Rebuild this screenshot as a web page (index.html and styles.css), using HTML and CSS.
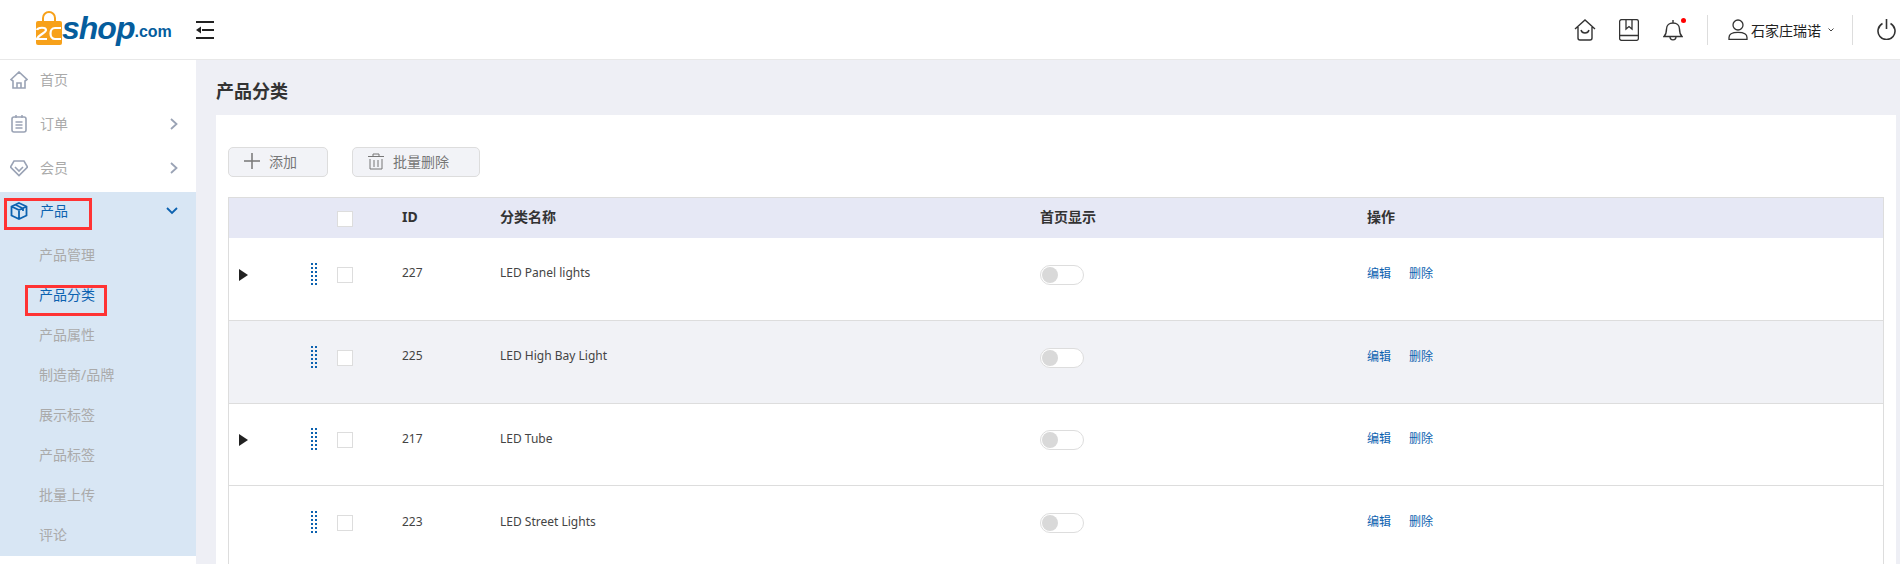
FILE: index.html
```html
<!DOCTYPE html>
<html lang="en">
<head>
  <meta charset="UTF-8">
  <meta name="viewport" content="width=device-width, initial-scale=1.0">
  <title>产品分类</title>
  <link rel="stylesheet" href="styles.css">
</head>
<body>
  <header class="topbar">
    <div class="logo">
      <svg class="logo-bag" width="26" height="34" viewBox="0 0 26 34">
        <path d="M7 11V7a6 6 0 0 1 12 0v4" fill="none" stroke="#f7a11a" stroke-width="2"/>
        <path d="M2 10h22a2 2 0 0 1 2 2v20a2 2 0 0 1-2 2H2a2 2 0 0 1-2-2V12a2 2 0 0 1 2-2z" fill="#f7a11a"/>
        <path d="M1 19c1-3 9-3 9 0 0 3-8 5-9 9h10M25 17h-6c-6 0-6 11 0 11h6" fill="none" stroke="#fff" stroke-width="2.200"/>
      </svg>
      <span class="logo-shop">shop</span><span class="logo-com">.com</span>
    </div>
    <svg class="menu-toggle" width="18" height="18" viewBox="0 0 18 18">
      <path d="M0 1h18M6 9h12M0 17h18" stroke="#222" stroke-width="2"/>
      <path d="M0 9l5-3.500v7z" fill="#222"/>
    </svg>
    <div class="topbar-right">
      <svg class="top-icon" width="22" height="22" viewBox="0 0 22 22">
        <path d="M1 10L11 1l10 9M4 8v11a2 2 0 0 0 2 2h10a2 2 0 0 0 2-2V8M7 11c1 4 7 4 8 0" fill="none" stroke="#333" stroke-width="1.400"/>
      </svg>
      <svg class="top-icon" width="20" height="22" viewBox="0 0 20 22">
        <rect x="0.600" y="0.600" width="18.800" height="20.800" rx="2" fill="none" stroke="#333" stroke-width="1.300"/>
        <path d="M0.600 16.500h18.800M7 1v9l3-2.500 3 2.500V1" fill="none" stroke="#333" stroke-width="1.300"/>
      </svg>
      <span class="bell">
        <svg width="20" height="22" viewBox="0 0 20 22">
          <path d="M1 17.500c2-2 2.500-4 2.500-7.500 0-4 3-6 6.500-6s6.500 2 6.500 6c0 3.500.5 5.500 2.500 7.500zM10 1v3M7 17.500c0 4.500 6 4.500 6 0" fill="none" stroke="#333" stroke-width="1.400"/>
        </svg>
        <i class="bell-dot"></i>
      </span>
      <span class="divider"></span>
      <div class="user">
        <svg width="20" height="21" viewBox="0 0 20 21">
          <circle cx="10" cy="6" r="5" fill="none" stroke="#333" stroke-width="1.300"/>
          <path d="M1 20.400v-2c0-3 3-5 9-5s9 2 9 5v2z" fill="none" stroke="#333" stroke-width="1.300"/>
        </svg>
        <span class="user-name">石家庄瑞诺</span>
        <svg width="6" height="4" viewBox="0 0 6 4"><path d="M.5.500L3 3 5.500.500" fill="none" stroke="#444" stroke-width="1"/></svg>
      </div>
      <span class="divider divider-last"></span>
      <svg width="19" height="21" viewBox="0 0 19 21">
        <path d="M5.500 4.500a8.500 8.500 0 1 0 8 0M9.500 0v10" fill="none" stroke="#333" stroke-width="1.600"/>
      </svg>
    </div>
  </header>

  <div class="layout">
    <aside class="sidebar">
      <a class="nav-item">
        <svg width="18" height="18" viewBox="0 0 18 18"><path d="M1 8.500L9 1l8 7.500-2 1.500v7H3v-7zM7 17v-5h4v5" fill="none" stroke="#9aa3b5" stroke-width="1.600"/></svg>
        <span>首页</span>
      </a>
      <a class="nav-item">
        <svg width="18" height="18" viewBox="0 0 18 18"><rect x="2" y="2" width="14" height="15" rx="2" fill="none" stroke="#9aa3b5" stroke-width="1.600"/><path d="M6 0v3M12 0v3M5.500 7h7M5.500 10h7M5.500 13h7" stroke="#9aa3b5" stroke-width="1.500"/></svg>
        <span>订单</span>
        <svg class="chev" width="8" height="12" viewBox="0 0 8 12"><path d="M1 1l5.500 5L1 11" fill="none" stroke="#9aa3b5" stroke-width="1.800"/></svg>
      </a>
      <a class="nav-item">
        <svg width="18" height="18" viewBox="0 0 18 18"><path d="M4 2h10l3.500 6L9 16.500.5 8zM5 8l4 4 4-4" fill="none" stroke="#9aa3b5" stroke-width="1.600"/></svg>
        <span>会员</span>
        <svg class="chev" width="8" height="12" viewBox="0 0 8 12"><path d="M1 1l5.500 5L1 11" fill="none" stroke="#9aa3b5" stroke-width="1.800"/></svg>
      </a>
      <div class="nav-group">
        <a class="nav-item nav-item-active">
          <svg width="18" height="18" viewBox="0 0 18 18"><path d="M9 1l7.500 3.500v9L9 17l-7.500-3.500v-9zM1.500 4.500L9 8l7.500-3.500M9 8v9M5.500 2.800L13 6.500V9" fill="none" stroke="#0c62b0" stroke-width="1.800"/></svg>
          <span>产品</span>
          <svg class="chev-down" width="12" height="8" viewBox="0 0 12 8"><path d="M1 1l5 5 5-5" fill="none" stroke="#0c62b0" stroke-width="1.800"/></svg>
        </a>
        <a class="sub-item">产品管理</a>
        <a class="sub-item sub-item-active">产品分类</a>
        <a class="sub-item">产品属性</a>
        <a class="sub-item">制造商/品牌</a>
        <a class="sub-item">展示标签</a>
        <a class="sub-item">产品标签</a>
        <a class="sub-item">批量上传</a>
        <a class="sub-item">评论</a>
      </div>
      <div class="mark mark-product"></div>
      <div class="mark mark-category"></div>
    </aside>

    <main class="main">
      <h1 class="page-title">产品分类</h1>
      <section class="card">
        <div class="toolbar">
          <button class="btn btn-add">
            <svg width="16" height="16" viewBox="0 0 16 16"><path d="M8 0v16M0 8h16" stroke="#777" stroke-width="1.500"/></svg>
            添加
          </button>
          <button class="btn btn-del">
            <svg width="16" height="17" viewBox="0 0 16 17"><path d="M0 3.500h16M5 3.500V1h6v2.500M2 6v10h12V6M6 7v7M10 7v7" fill="none" stroke="#777" stroke-width="1"/></svg>
            批量删除
          </button>
        </div>

        <div class="grid">
          <div class="row row-head">
            <span></span>
            <span></span>
            <span class="check"></span>
            <span>ID</span>
            <span>分类名称</span>
            <span>首页显示</span>
            <span>操作</span>
          </div>

          <div class="row">
            <span class="arrow"></span>
            <span class="drag"></span>
            <span class="check"></span>
            <span>227</span>
            <span>LED Panel lights</span>
            <span class="switch"></span>
            <span class="actions"><a>编辑</a><a>删除</a></span>
          </div>

          <div class="row row-alt">
            <span></span>
            <span class="drag"></span>
            <span class="check"></span>
            <span>225</span>
            <span>LED High Bay Light</span>
            <span class="switch"></span>
            <span class="actions"><a>编辑</a><a>删除</a></span>
          </div>

          <div class="row">
            <span class="arrow"></span>
            <span class="drag"></span>
            <span class="check"></span>
            <span>217</span>
            <span>LED Tube</span>
            <span class="switch"></span>
            <span class="actions"><a>编辑</a><a>删除</a></span>
          </div>

          <div class="row">
            <span></span>
            <span class="drag"></span>
            <span class="check"></span>
            <span>223</span>
            <span>LED Street Lights</span>
            <span class="switch"></span>
            <span class="actions"><a>编辑</a><a>删除</a></span>
          </div>
        </div>
      </section>
    </main>
  </div>
</body>
</html>
```

FILE: styles.css
```css
* {
  box-sizing: border-box;
}
html,
body {
  height: 100%;
  margin: 0;
  overflow: hidden;
}
body {
  font-family: "Noto Sans", "Noto Sans CJK SC", sans-serif;
  font-size: 14px;
  color: #333;
  background-color: #fff;
}

/* top bar */
.topbar {
  display: flex;
  align-items: center;
  height: 60px;
  padding: 0 4px 0 36px;
  border-bottom: 1px solid #e8e8e8;
}
.logo {
  display: flex;
  align-items: flex-end;
  width: 160px;
  height: 36px;
  margin-top: -4px;
}
.logo-bag {
  flex: none;
  margin-bottom: 1px;
}
.logo-shop {
  font-family: "Liberation Sans", sans-serif;
  font-size: 32px;
  font-weight: bold;
  font-style: italic;
  line-height: 36px;
  letter-spacing: -1px;
  color: #055d9d;
}
.logo-com {
  font-family: "Liberation Sans", sans-serif;
  font-size: 16px;
  font-weight: bold;
  line-height: 28px;
  color: #055d9d;
}
.menu-toggle {
  flex: none;
}
.topbar-right {
  display: flex;
  align-items: center;
  margin-left: auto;
}
.top-icon {
  margin-right: 23px;
}
.top-icon + .top-icon {
  margin-right: 24px;
}
.bell {
  position: relative;
  display: flex;
}
.bell-dot {
  position: absolute;
  top: -1px;
  right: -3px;
  width: 5px;
  height: 5px;
  border-radius: 50%;
  background-color: #f00;
}
.divider {
  width: 1px;
  height: 30px;
  margin: 0 20px 0 24px;
  background-color: #ddd;
}
.divider-last {
  margin: 0 24px 0 18px;
}
.user {
  display: flex;
  align-items: center;
}
.user-name {
  margin: 0 7px 0 3px;
  color: #222;
}

/* side menu */
.layout {
  display: flex;
  height: calc(100% - 60px);
}
.sidebar {
  position: relative;
  flex: none;
  width: 196px;
  background-color: #fff;
}
.nav-item {
  display: flex;
  align-items: center;
  height: 44px;
  padding: 0 18px 4px 10px;
  color: #aaa;
}
.nav-item span {
  margin-left: 12px;
  margin-bottom: 2px;
}
.chev,
.chev-down {
  margin-left: auto;
}
.nav-group {
  height: 364px;
  background-color: #d8e6f4;
}
.nav-item-active {
  height: 40px;
  padding-bottom: 2px;
  color: #0c62b0;
}
.sub-item {
  display: block;
  height: 40px;
  padding-left: 39px;
  line-height: 45px;
  color: #aaa;
}
.sub-item-active {
  color: #0c62b0;
}

/* red annotation boxes */
.mark {
  position: absolute;
  border: 3px solid #f33;
}
.mark-product {
  top: 138px;
  left: 4px;
  width: 88px;
  height: 32px;
}
.mark-category {
  top: 225px;
  left: 25px;
  width: 82px;
  height: 31px;
}

/* content */
.main {
  flex: 1;
  min-width: 0;
  padding: 0 4px 0 20px;
  background-color: #eeeff5;
}
.page-title {
  height: 55px;
  margin: 0;
  font-size: 18px;
  font-weight: bold;
  line-height: 62px;
  color: #333;
}
.card {
  height: 449px;
  padding: 32px 12px 0;
  overflow: hidden;
  background-color: #fff;
}
.toolbar {
  display: flex;
  gap: 24px;
  margin-bottom: 20px;
}
.btn {
  display: flex;
  align-items: center;
  height: 30px;
  padding: 0 15px 2px;
  border: 1px solid #ddd;
  border-radius: 5px;
  background-color: #f2f3f7;
  font: inherit;
  color: #777;
}
.btn svg {
  margin-right: 9px;
}
.btn-add {
  width: 100px;
}
.btn-del {
  width: 128px;
}

/* table */
.grid {
  border: 1px solid #ddd;
  border-bottom: 0;
  font-size: 12px;
}
.row {
  display: grid;
  grid-template-columns: 82px 6px 85px 98px 540px 327px 1fr;
  align-items: center;
  height: 82.75px;
  padding-bottom: 8px;
  border-bottom: 1px solid #ddd;
  color: #444;
}
.row > span {
  margin-bottom: 4px;
}
.row-head {
  height: 40px;
  padding-bottom: 0;
  border-bottom: 0;
  background-color: #e6e8f5;
  font-size: 14px;
  font-weight: bold;
  color: #333;
}
.row-alt {
  background-color: #f1f2f6;
}
.row > .arrow {
  width: 0;
  height: 0;
  margin: 0 0 0 10px;
  border-top: 6px solid transparent;
  border-bottom: 6px solid transparent;
  border-left: 9px solid #222;
}
.row > .drag {
  width: 6px;
  height: 22px;
  margin-bottom: 2px;
  background-image: repeating-linear-gradient(#0c62b0 0 2px, transparent 2px 4px);
  -webkit-mask-image: repeating-linear-gradient(90deg, #000 0 2px, transparent 2px 4px);
  mask-image: repeating-linear-gradient(90deg, #000 0 2px, transparent 2px 4px);
}
.row > .check {
  display: block;
  width: 16px;
  height: 16px;
  margin: 0 0 0 20px;
  border: 1px solid #ddd;
  background-color: #fff;
}
.row-head > .check {
  margin-top: 2px;
}
.row > .switch {
  display: block;
  position: relative;
  width: 44px;
  height: 20px;
  margin-bottom: 0;
  border: 1px solid #ddd;
  border-radius: 10px;
  background-color: #fff;
}
.switch::before {
  content: "";
  position: absolute;
  top: 1px;
  left: 1px;
  width: 16px;
  height: 16px;
  border-radius: 50%;
  background-color: #d9d9d9;
}
.actions {
  display: flex;
  gap: 18px;
}
.actions a {
  color: #0c62b0;
}
```
